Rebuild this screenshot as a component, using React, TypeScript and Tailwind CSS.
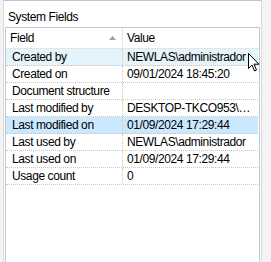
const rows: { field: string; value: string; state?: "hover" | "selected" }[] = [
  { field: "Created by", value: "NEWLAS\\administrador", state: "hover" },
  { field: "Created on", value: "09/01/2024 18:45:20" },
  { field: "Document structure", value: "" },
  { field: "Last modified by", value: "DESKTOP-TKCO953\\GUEST" },
  { field: "Last modified on", value: "01/09/2024 17:29:44", state: "selected" },
  { field: "Last used by", value: "NEWLAS\\administrador" },
  { field: "Last used on", value: "01/09/2024 17:29:44" },
  { field: "Usage count", value: "0" },
];

const Cursor = () => (
  <svg className="absolute left-[248px] top-[53px]" width="12" height="19" viewBox="0 0 12 19">
    <path d="M0.5 0.5 L0.5 15.5 L4 12 L6.5 18 L8.5 17 L6 11.2 L11 11.2 Z" fill="#fff" stroke="#000" strokeWidth="1" />
  </svg>
);

const Row = ({ field, value, state }: { field: string; value: string; state?: string }) => {
  const bg = state === "hover" ? "bg-[#e5f3fb]" : state === "selected" ? "bg-[#cce8ff]" : "bg-white";
  return (
    <div className={`flex h-[17px] border-b border-dotted border-[#c8c8c8] ${bg}`}>
      <div className="w-[117px] shrink-0 pl-[6px] border-r border-dotted border-[#c8c8c8] leading-[16px] truncate">{field}</div>
      <div className="flex-1 min-w-0 pl-[4px] pr-[3px] leading-[16px] truncate">{value}</div>
    </div>
  );
};

export default function App() {
  return (
    <div className="relative w-[271px] h-[262px] bg-[#f3f3f3] overflow-hidden text-[12px] tracking-[-0.4px] text-black" style={{ fontFamily: '"Liberation Sans", Arial, sans-serif' }}>
      <div className="ml-[3px] w-[259px] h-full bg-white border-l border-r border-[#dadada] border-t border-t-[#b8c8d8]">
        <div className="h-[26px] pl-[4px] pt-[9px] leading-[15px]">System Fields</div>
        <div className="ml-[1px] mr-[1px] h-[240px] border border-[#bccbd8] border-b-0">
          <div className="flex h-[21px] border-b border-[#e5e5e5]">
            <div className="w-[117px] shrink-0 flex items-center justify-between pl-[4px] pr-[6px] border-r border-[#e5e5e5]">
              <span>Field</span>
              <svg width="7" height="4" viewBox="0 0 7 4"><path d="M0 4 L3.5 0 L7 4 Z" fill="#a0a0a0" /></svg>
            </div>
            <div className="flex items-center pl-[4px]">Value</div>
          </div>
          <div className="pr-[1px]">
            {rows.map((r) => (
              <Row key={r.field} {...r} />
            ))}
          </div>
        </div>
      </div>
      <Cursor />
    </div>
  );
}
